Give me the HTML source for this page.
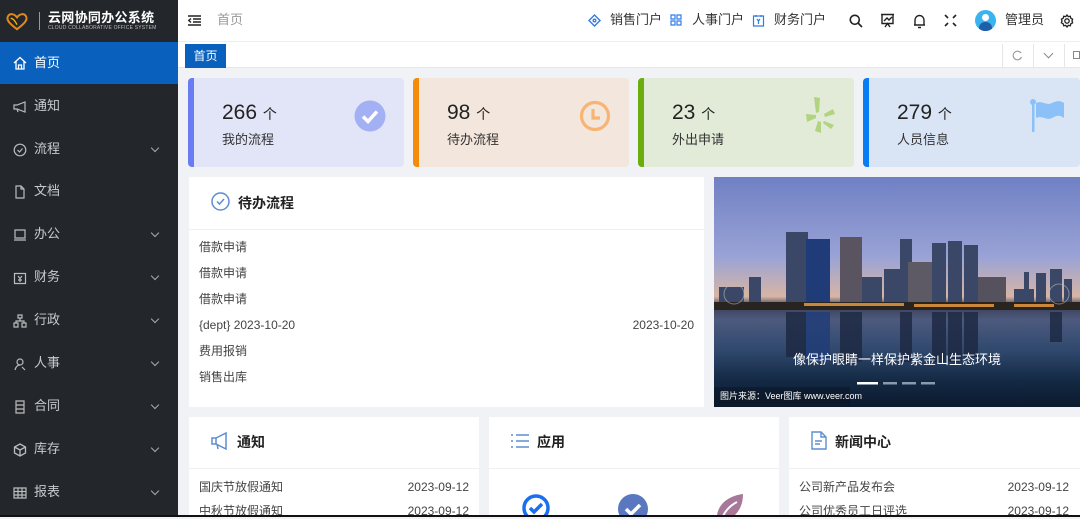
<!DOCTYPE html>
<html><head><meta charset="utf-8"><style>
*{margin:0;padding:0;box-sizing:border-box}
body{width:1080px;height:517px;overflow:hidden;background:#f0f2f5;font-family:"Liberation Sans","Noto Sans CJK SC",sans-serif;position:relative;color:#333;line-height:1.15}
.abs{position:absolute}
#side{left:0;top:0;width:178px;height:517px;background:#23272c}
.logo{height:42px;display:flex;align-items:center;padding-left:5px;color:#fff}
.mi{position:absolute;left:0;width:178px;height:43px;display:flex;align-items:center;color:#c8cacd;font-size:13px}
.mi .ic{width:14px;height:14px;margin-left:13px;margin-right:7px;display:flex;align-items:center;justify-content:center}
.mi .ar{position:absolute;right:20px;top:17px;width:6px;height:6px;border-right:1.3px solid #aaa;border-bottom:1.3px solid #aaa;transform:rotate(45deg)}
#hdr{left:178px;top:0;width:902px;height:42px;background:#fff;border-bottom:1px solid #eee}
#hdr .t{position:absolute;top:13px;font-size:13px;color:#333}
#tabs{left:178px;top:42px;width:902px;height:26px;background:#fff;border-bottom:1px solid #e6e6e6}
.card{position:absolute;top:78px;height:89px;border-radius:4px;overflow:hidden}
.card .bar{position:absolute;left:0;top:0;width:6px;height:100%}
.card .n{position:absolute;left:34px;top:23px;font-size:21px;color:#222}
.card .n span{font-size:14px}
.card .l{position:absolute;left:34px;top:55px;font-size:13px;color:#333}
.panel{position:absolute;background:#fff}
.ph{height:53px;border-bottom:1px solid #f0f0f0;display:flex;align-items:center;font-size:14px;font-weight:bold;color:#222}
.row{font-size:12px;color:#444;position:absolute;left:10px}
</style></head><body>
<div id="side" class="abs">
 <div class="logo">
  <svg width="24" height="20" viewBox="0 0 26 22"><path d="M13 20C5 14 1 10 3 6c2-4 7-3 10 1c3-4 8-5 10-1c2 4-2 8-10 14z" fill="none" stroke="#e08a1e" stroke-width="2.2"/><path d="M6 8c3 0 5 3 7 7" stroke="#f4b400" stroke-width="1.5" fill="none"/></svg>
  <div style="width:1px;height:18px;background:#999;margin:0 8px 0 10px"></div>
  <div><div style="font-size:13px;font-weight:bold;letter-spacing:0.3px">云网协同办公系统</div><div style="font-size:5px;color:#bbb;letter-spacing:0.2px">CLOUD COLLABORATIVE OFFICE SYSTEM</div></div>
 </div>
 <div class="mi" style="top:42px;height:42px;background:#0a60bd;color:#fff"><div class="ic"><svg width="14" height="14" viewBox="0 0 14 14" fill="none" stroke="#fff" stroke-width="1.3"><path d="M1 7L7 1.5L13 7M3 5.5V13H11V5.5M5.5 13V9h3v4"/></svg></div>首页</div>
 <div class="mi" style="top:85px"><div class="ic"><svg width="14" height="14" viewBox="0 0 14 14" fill="none" stroke="#bbb" stroke-width="1.2"><path d="M1 5h3l8-3v10l-8-3H1zM4 9l1 3"/></svg></div>通知</div>
 <div class="mi" style="top:128px"><div class="ic"><svg width="14" height="14" viewBox="0 0 14 14" fill="none" stroke="#bbb" stroke-width="1.2"><circle cx="7" cy="7" r="5.8"/><path d="M4.5 7l2 2 3-3.5"/></svg></div>流程<i class="ar"></i></div>
 <div class="mi" style="top:170px"><div class="ic"><svg width="14" height="14" viewBox="0 0 14 14" fill="none" stroke="#bbb" stroke-width="1.2"><path d="M3 1h5l3 3v9H3zM8 1v3h3"/></svg></div>文档</div>
 <div class="mi" style="top:213px"><div class="ic"><svg width="14" height="14" viewBox="0 0 14 14" fill="none" stroke="#bbb" stroke-width="1.2"><path d="M2 2h10v8H2zM1 12h12"/></svg></div>办公<i class="ar"></i></div>
 <div class="mi" style="top:256px"><div class="ic"><svg width="14" height="14" viewBox="0 0 14 14" fill="none" stroke="#bbb" stroke-width="1.2"><path d="M1.5 2.5h11v10h-11zM5 5l2 2.5 2-2.5M7 7.5V11M5 9h4"/></svg></div>财务<i class="ar"></i></div>
 <div class="mi" style="top:299px"><div class="ic"><svg width="14" height="14" viewBox="0 0 14 14" fill="none" stroke="#bbb" stroke-width="1.2"><path d="M5 1h4v3H5zM1 9h4v4H1zM9 9h4v4H9zM7 4v3M3 9V7h8v2"/></svg></div>行政<i class="ar"></i></div>
 <div class="mi" style="top:342px"><div class="ic"><svg width="14" height="14" viewBox="0 0 14 14" fill="none" stroke="#bbb" stroke-width="1.2"><circle cx="7" cy="5" r="3"/><path d="M2 13c1-4 3-5 5-5M9 10l3 3"/></svg></div>人事<i class="ar"></i></div>
 <div class="mi" style="top:385px"><div class="ic"><svg width="14" height="14" viewBox="0 0 14 14" fill="none" stroke="#bbb" stroke-width="1.2"><path d="M3 1h8v12H3zM3 5h8M3 9h8"/></svg></div>合同<i class="ar"></i></div>
 <div class="mi" style="top:428px"><div class="ic"><svg width="14" height="14" viewBox="0 0 14 14" fill="none" stroke="#bbb" stroke-width="1.3"><path d="M7 1l5.5 3v6L7 13 1.5 10V4zM1.5 4L7 7l5.5-3M7 7v6"/></svg></div>库存<i class="ar"></i></div>
 <div class="mi" style="top:471px"><div class="ic"><svg width="14" height="14" viewBox="0 0 14 14" fill="none" stroke="#bbb" stroke-width="1.2"><path d="M1 2h12v10H1zM1 5.5h12M1 9h12M5 2v10M9 2v10"/></svg></div>报表<i class="ar"></i></div>
</div>
<div id="hdr" class="abs">
 <svg class="abs" style="left:10px;top:15px" width="13" height="11" viewBox="0 0 13 11" fill="none" stroke="#222" stroke-width="1.4"><path d="M0 1h13M5 4h8M5 7h8M0 10h13M3 3.5L0.8 5.5 3 7.5"/></svg>
 <div class="t" style="left:39px;color:#999">首页</div>
 <svg class="abs" style="left:410px;top:14px" width="13" height="13" viewBox="0 0 13 13" fill="none" stroke="#2f7ce8" stroke-width="1.4"><path d="M6.5 1L12 6.5 6.5 12 1 6.5z"/><circle cx="6.5" cy="6.5" r="1.3"/></svg>
 <div class="t" style="left:432px">销售门户</div>
 <svg class="abs" style="left:492px;top:14px" width="12" height="12" viewBox="0 0 12 12" fill="none" stroke="#2f7ce8" stroke-width="1.2"><path d="M1 1h4v4H1zM7 1h4v4H7zM1 7h4v4H1zM7 7h4v4H7z"/></svg>
 <div class="t" style="left:514px">人事门户</div>
 <svg class="abs" style="left:574px;top:14px" width="13" height="13" viewBox="0 0 13 13" fill="none" stroke="#2f7ce8" stroke-width="1.2"><path d="M1.5 2h10v10h-10zM4 1v2M9 1v2M5 5l1.5 2 1.5-2M6.5 7v3"/></svg>
 <div class="t" style="left:596px">财务门户</div>
 <svg class="abs" style="left:671px;top:14px" width="14" height="14" viewBox="0 0 14 14" fill="none" stroke="#222" stroke-width="1.6"><circle cx="5.8" cy="5.8" r="4.5"/><path d="M9 9l4 4"/></svg>
 <svg class="abs" style="left:702px;top:13px" width="15" height="15" viewBox="0 0 15 15" fill="none" stroke="#222" stroke-width="1.4"><path d="M1 1.5h13M2 1.5v9h11v-9M4 8l3-3 2 2 3-3M5 14l2.5-3.5L10 14"/></svg>
 <svg class="abs" style="left:735px;top:14px" width="13" height="15" viewBox="0 0 13 15" fill="none" stroke="#222" stroke-width="1.4"><path d="M2 11V6a4.5 4.5 0 0 1 9 0v5zM1 11h11M5 13.5h3"/></svg>
 <svg class="abs" style="left:766px;top:14px" width="13" height="13" viewBox="0 0 13 13" fill="none" stroke="#222" stroke-width="1.6"><path d="M1 1l3 3M12 1l-3 3M1 12l3-3M12 12l-3-3"/></svg>
 <div class="abs" style="left:797px;top:10px;width:21px;height:21px;border-radius:50%;background:#3ab4ef;overflow:hidden"><div class="abs" style="left:7px;top:4px;width:7px;height:7px;border-radius:50%;background:#fff"></div><div class="abs" style="left:4px;top:12px;width:13px;height:10px;border-radius:6px 6px 0 0;background:#1d5fa8"></div></div>
 <div class="t" style="left:827px">管理员</div>
 <svg class="abs" style="left:882px;top:14px" width="14" height="14" viewBox="0 0 14 14" fill="none" stroke="#222" stroke-width="1.3"><circle cx="7" cy="7" r="2.2"/><path d="M7 1l1.3 1.6 2-.4.5 2 1.8 1L12 7l.6 1.8-1.8 1-.5 2-2-.4L7 13l-1.3-1.6-2 .4-.5-2-1.8-1L2 7l-.6-1.8 1.8-1 .5-2 2 .4z"/></svg>
</div>
<div id="tabs" class="abs">
 <div class="abs" style="left:7px;top:2px;width:41px;height:24px;background:#0a60bd;color:#fff;font-size:12px;line-height:24px;text-align:center">首页</div>
 <div class="abs" style="left:824px;top:2px;width:1px;height:24px;background:#e6e6e6"></div>
 <div class="abs" style="left:855px;top:2px;width:1px;height:24px;background:#e6e6e6"></div>
 <div class="abs" style="left:886px;top:2px;width:1px;height:24px;background:#e6e6e6"></div>
 <svg class="abs" style="left:834px;top:8px" width="11" height="11" viewBox="0 0 11 11" fill="none" stroke="#999" stroke-width="1.1"><path d="M9 3A4.3 4.3 0 1 0 9.5 7"/></svg>
 <div class="abs" style="left:867px;top:8px;width:7px;height:7px;border-right:1.2px solid #888;border-bottom:1.2px solid #888;transform:rotate(45deg)"></div>
 <div class="abs" style="left:895px;top:9px;width:7px;height:8px;border:1.2px solid #888"></div>
</div>
<div class="card" style="left:188px;width:216px;background:#e2e5f7"><div class="bar" style="background:#6a7cf4"></div><div class="n">266 <span>个</span></div><div class="l">我的流程</div>
 <svg class="abs" style="left:166px;top:22px" width="32" height="32" viewBox="0 0 32 32"><circle cx="16" cy="16" r="15.5" fill="#a3b0f4"/><path d="M9 16.5l5 5 9-10" stroke="#fff" stroke-width="3.5" fill="none"/></svg></div>
<div class="card" style="left:413px;width:216px;background:#f3e6dc"><div class="bar" style="background:#f58a0b"></div><div class="n">98 <span>个</span></div><div class="l">待办流程</div>
 <svg class="abs" style="left:166px;top:22px" width="32" height="32" viewBox="0 0 32 32" fill="none" stroke="#f8b472" stroke-width="3.2"><circle cx="16" cy="16" r="13.5"/><path d="M14 9v9h7"/></svg></div>
<div class="card" style="left:638px;width:216px;background:#e2ead8"><div class="bar" style="background:#6aad0d"></div><div class="n">23 <span>个</span></div><div class="l">外出申请</div>
 <svg class="abs" style="left:168px;top:18px" width="30" height="38" viewBox="0 0 30 38" fill="#b2d37f"><path d="M8 1l6 1-1 14-3 1z"/><path d="M0 18l10 1 0 3-9 4z"/><path d="M18 18l9-5 2 5-10 3z"/><path d="M12 25l3 1 0 11-6-2z"/><path d="M18 25l10 4-3 4-8-6z"/></svg></div>
<div class="card" style="left:863px;width:217px;background:#d9e5f5"><div class="bar" style="background:#0a7cf4"></div><div class="n">279 <span>个</span></div><div class="l">人员信息</div>
 <svg class="abs" style="left:166px;top:20px" width="38" height="36" viewBox="0 0 38 36" fill="#8cc0f8"><circle cx="4" cy="4" r="3"/><rect x="3" y="4" width="2.5" height="30"/><path d="M7 5c6-3 10 3 16 0s9-2 12 0v15c-4-3-7-3-12 0s-10-3-16 0z"/></svg></div>
<div class="panel" style="left:189px;top:177px;width:515px;height:230px">
 <div class="ph"><svg style="margin:-4px 8px 0 22px" width="19" height="19" viewBox="0 0 19 19" fill="none" stroke="#5b8fd0" stroke-width="1.5"><circle cx="9.5" cy="9.5" r="8.5"/><path d="M6 9.5l2.5 2.5 4.5-5"/></svg>待办流程</div>
 <div class="row" style="top:64px">借款申请</div>
 <div class="row" style="top:90px">借款申请</div>
 <div class="row" style="top:116px">借款申请</div>
 <div class="row" style="top:142px">{dept} 2023-10-20</div>
 <div class="row" style="top:142px;left:auto;right:10px">2023-10-20</div>
 <div class="row" style="top:168px">费用报销</div>
 <div class="row" style="top:194px">销售出库</div>
</div>
<div class="panel" style="left:714px;top:177px;width:366px;height:230px;overflow:hidden;background:linear-gradient(#6f80c4 0%,#9aa3d6 35%,#d7b5a4 52%,#3a3f57 56%,#4d5a7e 62%,#30496e 75%,#142a45 88%,#0b1a2e 100%)">
 <svg class="abs" style="left:0;top:0" width="366" height="230" viewBox="0 0 366 230">
  <g fill="#3a4766">
   <rect x="5" y="110" width="25" height="20"/><rect x="35" y="100" width="12" height="30"/><rect x="72" y="55" width="22" height="75"/><rect x="92" y="62" width="24" height="68" fill="#1f3c78"/><rect x="126" y="60" width="22" height="70" fill="#5a5460"/><rect x="148" y="100" width="20" height="30"/><rect x="170" y="92" width="16" height="38"/><rect x="186" y="62" width="12" height="68"/><rect x="194" y="85" width="24" height="45" fill="#5d5a66"/><rect x="218" y="66" width="14" height="64"/><rect x="234" y="64" width="14" height="66"/><rect x="250" y="68" width="14" height="62"/><rect x="264" y="100" width="28" height="30" fill="#55525e"/><rect x="300" y="112" width="20" height="18"/><rect x="310" y="95" width="5" height="35"/><rect x="322" y="96" width="10" height="34"/><rect x="336" y="92" width="12" height="38"/><rect x="350" y="102" width="8" height="28"/>
  </g>
  <rect x="0" y="125" width="366" height="8" fill="#2a2420"/>
  <g fill="#f0a040" opacity="0.8"><rect x="90" y="126" width="100" height="3"/><rect x="200" y="127" width="80" height="3"/><rect x="300" y="127" width="40" height="3"/></g>
  <g fill="#1c2740" opacity="0.8">
   <rect x="72" y="135" width="22" height="45"/><rect x="92" y="135" width="24" height="50" fill="#1f3c78"/><rect x="126" y="135" width="22" height="50"/><rect x="186" y="135" width="12" height="50"/><rect x="218" y="135" width="14" height="50"/><rect x="234" y="135" width="14" height="50"/><rect x="250" y="135" width="14" height="45"/><rect x="336" y="135" width="12" height="30"/>
  </g>
  <circle cx="20" cy="117" r="10" fill="none" stroke="#bbb" stroke-width="1" opacity="0.6"/>
  <circle cx="345" cy="117" r="10" fill="none" stroke="#bbb" stroke-width="1" opacity="0.6"/>
  <rect x="143" y="205" width="21" height="2.5" fill="#fff"/><rect x="169" y="205" width="14" height="2.5" fill="#8a9aaa"/><rect x="188" y="205" width="14" height="2.5" fill="#8a9aaa"/><rect x="207" y="205" width="14" height="2.5" fill="#8a9aaa"/>
  <rect x="0" y="210" width="136" height="20" fill="#0c1828" opacity="0.7"/>
 </svg>
 <div class="abs" style="left:0;width:366px;top:176px;text-align:center;color:#fff;font-size:13px">像保护眼睛一样保护紫金山生态环境</div>
 <div class="abs" style="left:6px;top:214px;color:#fff;font-size:9px">图片来源：Veer图库 www.veer.com</div>
</div>
<div class="panel" style="left:189px;top:417px;width:290px;height:100px">
 <div class="ph" style="height:52px"><svg style="margin:-4px 8px 0 22px" width="18" height="18" viewBox="0 0 18 18" fill="none" stroke="#5b8fd0" stroke-width="1.5"><path d="M1 6h4l10-5v16L5 12H1zM5 6v6M6 12l1 5"/></svg>通知</div>
 <div class="row" style="top:64px">国庆节放假通知</div><div class="row" style="top:64px;left:auto;right:10px">2023-09-12</div>
 <div class="row" style="top:88px">中秋节放假通知</div><div class="row" style="top:88px;left:auto;right:10px">2023-09-12</div>
</div>
<div class="panel" style="left:489px;top:417px;width:290px;height:100px;overflow:hidden">
 <div class="ph" style="height:52px"><svg style="margin:-4px 8px 0 22px" width="18" height="16" viewBox="0 0 18 16" fill="none" stroke="#5b8fd0" stroke-width="1.5"><path d="M0 2h2M5 2h13M0 8h2M5 8h13M0 14h2M5 14h13"/></svg>应用</div>
 <svg class="abs" style="left:33px;top:77px" width="28" height="28" viewBox="0 0 28 28"><circle cx="14" cy="14" r="12" fill="none" stroke="#1a6ff0" stroke-width="3.5"/><path d="M8 14l4 4 8-8" stroke="#1a6ff0" stroke-width="3.5" fill="none"/></svg>
 <svg class="abs" style="left:129px;top:77px" width="30" height="30" viewBox="0 0 30 30"><circle cx="15" cy="15" r="15" fill="#5a78c0"/><path d="M8 15l5 5 9-9" stroke="#fff" stroke-width="3.5" fill="none"/></svg>
 <svg class="abs" style="left:224px;top:75px" width="32" height="32" viewBox="0 0 32 32"><path d="M4 30C2 14 14 4 30 2c0 18-12 28-26 28z" fill="#a8789a"/><path d="M10 24c4-8 10-12 14-14" stroke="#fff" stroke-width="2" fill="none"/></svg>
</div>
<div class="panel" style="left:789px;top:417px;width:291px;height:100px">
 <div class="ph" style="height:52px"><svg style="margin:-4px 8px 0 22px" width="16" height="19" viewBox="0 0 16 19" fill="none" stroke="#5b8fd0" stroke-width="1.4"><path d="M1 1h9l5 5v12H1zM10 1v5h5M4 10h7M4 13h5"/></svg>新闻中心</div>
 <div class="row" style="top:64px">公司新产品发布会</div><div class="row" style="top:64px;left:auto;right:11px">2023-09-12</div>
 <div class="row" style="top:88px">公司优秀员工日评选</div><div class="row" style="top:88px;left:auto;right:11px">2023-09-12</div>
</div>
<div class="abs" style="left:0;top:515px;width:1080px;height:2px;background:#111"></div>
</body></html>
